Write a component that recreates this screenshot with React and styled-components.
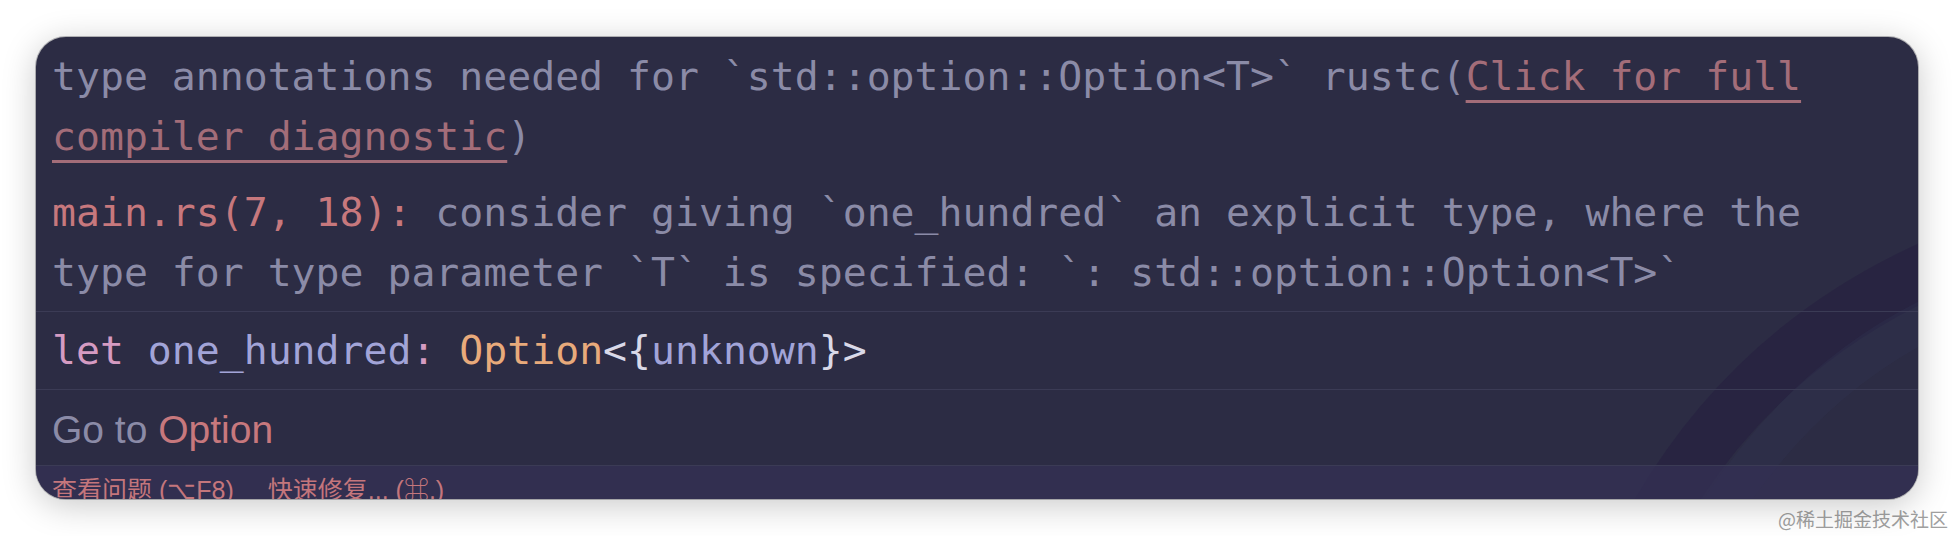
import React from 'react';
import styled, { createGlobalStyle } from 'styled-components';

const GlobalStyle = createGlobalStyle`
  html, body {
    margin: 0;
    padding: 0;
    background: #ffffff;
  }
`;

const Page = styled.div`
  width: 1954px;
  height: 536px;
  padding: 37px 36px 0 36px;
  box-sizing: border-box;
  display: flex;
  flex-direction: column;
`;

const Card = styled.div`
  position: relative;
  width: 1882px;
  height: 462px;
  flex-shrink: 0;
  border-radius: 30px;
  overflow: hidden;
  background: #2c2c44;
  box-shadow: 0 0 0 1px rgba(60, 60, 70, 0.35), 0 6px 34px rgba(0, 0, 0, 0.22);
  display: flex;
  flex-direction: column;
`;

const Wallpaper = styled.svg`
  position: absolute;
  inset: 0;
  pointer-events: none;
`;

const Section = styled.div`
  position: relative;
  flex-shrink: 0;
  padding: ${(p) => p.$pad || '0 16px'};
  border-bottom: ${(p) => (p.$divider ? '1px solid #3b3b55' : 'none')};
  font-family: 'DejaVu Sans Mono', 'Liberation Mono', monospace;
  font-size: 39.8px;
  line-height: 60px;
  color: #8b8ba7;
  white-space: normal;
`;

const Para = styled.div`
  margin-bottom: ${(p) => p.$gap || '0'};
`;

const Link = styled.span`
  color: #a36d79;
  text-decoration: underline;
  text-decoration-thickness: 3px;
  text-underline-offset: 10px;
`;

const Tok = styled.span`
  color: ${(p) => p.$c};
  white-space: pre;
`;

const GoTo = styled.div`
  position: relative;
  flex-shrink: 0;
  height: 76px;
  padding: 4px 16px 0;
  box-sizing: border-box;
  display: flex;
  align-items: center;
  border-bottom: 1px solid #3b3b55;
  font-family: 'Liberation Sans', Arial, sans-serif;
  font-size: 39px;
  color: #8b8ba7;
`;

const Footer = styled.div`
  position: relative;
  flex: 1;
  min-height: 0;
  background: rgba(52, 48, 84, 0.75);
  padding: 7px 16px 0;
  display: flex;
  gap: 34px;
  font-family: 'Liberation Sans', 'Noto Sans CJK SC', sans-serif;
  font-size: 25px;
  line-height: 34px;
  color: #c4767c;
  white-space: pre;
`;

const Watermark = styled.div`
  align-self: flex-end;
  margin: 8px -30px 0 0;
  font-family: 'Noto Sans CJK SC', sans-serif;
  font-size: 19px;
  line-height: 24px;
  color: #a0a0a0;
`;

const C = {
  red: '#c7787d',
  pink: '#d59bc2',
  lav: '#a2a4d8',
  orange: '#e8aa7b',
  white: '#d9d9e8',
};

export default function App() {
  return (
    <>
      <GlobalStyle />
      <Page>
        <Card>
          <Wallpaper width="1882" height="462" viewBox="0 0 1882 462">
            <path
              d="M 1610 500 Q 1710 310 1910 225"
              fill="none"
              stroke="rgba(36, 26, 62, 0.4)"
              strokeWidth="56"
            />
            <path
              d="M 1668 500 Q 1768 330 1930 265"
              fill="none"
              stroke="rgba(50, 54, 84, 0.3)"
              strokeWidth="40"
            />
          </Wallpaper>
          <Section $pad="9px 16px 0">
            <Para $gap="16px">
              type annotations needed for `std::option::Option&lt;T&gt;` rustc(<Link>Click for full compiler diagnostic</Link>)
            </Para>
          </Section>
          <Section $pad="0 16px 9px" $divider>
            <Para>
              <Tok $c={C.red}>main.rs(7, 18): </Tok>
              consider giving `one_hundred` an explicit type, where the type for type parameter `T` is
              specified: `: std::option::Option&lt;T&gt;`
            </Para>
          </Section>
          <Section $pad="8px 16px 9px" $divider>
            <Tok $c={C.pink}>let </Tok>
            <Tok $c={C.lav}>one_hundred</Tok>
            <Tok $c={C.pink}>: </Tok>
            <Tok $c={C.orange}>Option</Tok>
            <Tok $c={C.white}>&lt;{'{'}</Tok>
            <Tok $c={C.lav}>unknown</Tok>
            <Tok $c={C.white}>{'}'}&gt;</Tok>
          </Section>
          <GoTo>
            Go to&nbsp;<Tok $c={C.red}>Option</Tok>
          </GoTo>
          <Footer>
            <span>查看问题 (⌥F8)</span>
            <span>快速修复... (⌘.)</span>
          </Footer>
        </Card>
        <Watermark>@稀土掘金技术社区</Watermark>
      </Page>
    </>
  );
}
